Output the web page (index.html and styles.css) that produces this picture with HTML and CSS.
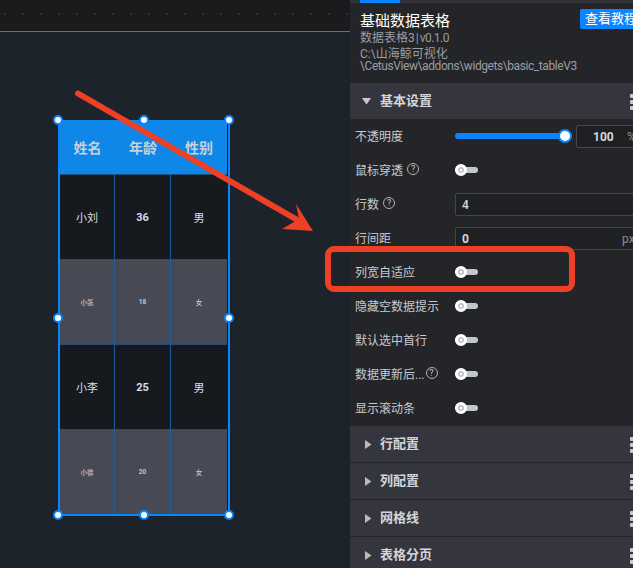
FILE: index.html
```html
<!DOCTYPE html>
<html lang="zh">
<head>
<meta charset="utf-8">
<title>基础数据表格</title>
<link rel="stylesheet" href="styles.css">
</head>
<body>
<div class="app">
  <main class="canvas">
    <div class="ruler"><div class="ruler-dots"></div></div>
    <div class="stage">
      <div class="widget">
        <div class="tbl">
          <div class="cell head">姓名</div><div class="cell head">年龄</div><div class="cell head">性别</div>
          <div class="cell dark">小刘</div><div class="cell dark num">36</div><div class="cell dark">男</div>
          <div class="cell grey">小张</div><div class="cell grey num">18</div><div class="cell grey">女</div>
          <div class="cell dark">小李</div><div class="cell dark num">25</div><div class="cell dark">男</div>
          <div class="cell grey">小徐</div><div class="cell grey num">20</div><div class="cell grey">女</div>
        </div>
        <i class="handle h-tl"></i><i class="handle h-tc"></i><i class="handle h-tr"></i>
        <i class="handle h-ml"></i><i class="handle h-mr"></i>
        <i class="handle h-bl"></i><i class="handle h-bc"></i><i class="handle h-br"></i>
      </div>
    </div>
  </main>
  <aside class="panel">
    <div class="tabstrip"><div class="tab-active"></div></div>
    <header class="info">
      <div class="title-row">
        <h1 class="title">基础数据表格</h1>
        <button class="help-btn">查看教程</button>
      </div>
      <div class="sub">数据表格<span class="tight">3 | v0.1.0</span></div>
      <div class="path">C:\山海鲸可视化<br><span class="tight-path">\CetusView\addons\widgets\basic_tableV3</span></div>
    </header>
    <section class="sec sec-open">
      <svg class="tri" viewBox="0 0 9 7"><path d="M0 0H9L4.5 6.5Z"/></svg>
      <span class="sec-name">基本设置</span>
      <span class="dots"><i></i><i></i><i></i></span>
    </section>
    <div class="rows">
      <div class="row"><label class="lbl">不透明度</label>
        <div class="slider"><div class="thumb"></div></div>
        <div class="field field-pct"><span class="val-c">100</span><span class="unit">%</span></div>
      </div>
      <div class="row"><label class="lbl">鼠标穿透<span class="q">?</span></label><div class="toggle"></div></div>
      <div class="row"><label class="lbl">行数<span class="q">?</span></label><div class="field">4</div></div>
      <div class="row"><label class="lbl">行间距</label><div class="field field-b">0<span class="unit unit-px">px</span></div></div>
      <div class="row"><label class="lbl">列宽自适应</label><div class="toggle"></div></div>
      <div class="row"><label class="lbl">隐藏空数据提示</label><div class="toggle"></div></div>
      <div class="row"><label class="lbl">默认选中首行</label><div class="toggle"></div></div>
      <div class="row"><label class="lbl">数据更新后...<span class="q q-tight">?</span></label><div class="toggle"></div></div>
      <div class="row"><label class="lbl">显示滚动条</label><div class="toggle"></div></div>
    </div>
    <section class="sec"><svg class="tri tri-r" viewBox="0 0 7 9"><path d="M0 0V9L6.5 4.5Z"/></svg><span class="sec-name">行配置</span><span class="dots"><i></i><i></i><i></i></span></section>
    <section class="sec"><svg class="tri tri-r" viewBox="0 0 7 9"><path d="M0 0V9L6.5 4.5Z"/></svg><span class="sec-name">列配置</span><span class="dots"><i></i><i></i><i></i></span></section>
    <section class="sec"><svg class="tri tri-r" viewBox="0 0 7 9"><path d="M0 0V9L6.5 4.5Z"/></svg><span class="sec-name">网格线</span><span class="dots"><i></i><i></i><i></i></span></section>
    <section class="sec"><svg class="tri tri-r" viewBox="0 0 7 9"><path d="M0 0V9L6.5 4.5Z"/></svg><span class="sec-name">表格分页</span><span class="dots"><i></i><i></i><i></i></span></section>
  </aside>
  <svg class="arrow" viewBox="0 0 633 568">
    <path d="M78 93.5L300 221.5" fill="none" stroke="#ee4025" stroke-width="6" stroke-linecap="round"/>
    <path d="M313 231L296 204L299 219L282 229Z" fill="#ee4025"/>
  </svg>
  <div class="callout"></div>
</div>
</body>
</html>
```
FILE: styles.css
```css
*, *::before, *::after { box-sizing: border-box; }
html, body { margin: 0; padding: 0; }
body {
  width: 633px;
  height: 568px;
  overflow: hidden;
  background: #1c232b;
  font-family: Roboto, "Noto Sans CJK SC", sans-serif;
}
.app { position: relative; display: flex; width: 633px; height: 568px; overflow: hidden; }

/* canvas */
.canvas { flex: 0 0 350px; display: flex; flex-direction: column; background: #1c232b; }
.ruler { height: 32px; flex: none; background: #1a1b1d; border-bottom: 1px solid #6b6c6e; padding-top: 13px; }
.ruler-dots {
  height: 2px;
  background-image: linear-gradient(90deg, #2d2e30 2px, transparent 2px);
  background-size: 18px 2px;
  background-position: 4px 0;
}
.stage { position: relative; flex: 1; }
.widget {
  position: absolute;
  left: 58px;
  top: 88px;
  width: 172px;
  height: 396px;
  border: 2px solid #0a84ff;
  background: #16191e;
}
.tbl {
  display: grid;
  grid-template-columns: 55px 56px 56px;
  grid-template-rows: 52px repeat(4, 85px);
  height: 392px;
}
.cell {
  display: flex;
  align-items: center;
  justify-content: center;
  color: #d8dce8;
  border-right: 1px solid #1c5d9a;
  border-top: 1px solid #1f5078;
}
.cell:nth-child(3n) { border-right: 0; }
.head {
  background: #0f87e8;
  color: #c9d1d6;
  font-size: 14px;
  font-weight: 700;
  border: 0;
  margin-top: -2px;
  margin-left: -1px;
  padding-left: 1px;
  padding-bottom: 1px;
  height: 54px;
}
.head:nth-child(3n) { margin-left: 0; padding-left: 0; }
.dark { background: #16191e; font-size: 11px; }
.grey { background: #474a55; font-size: 6.5px; font-weight: 500; color: #c3c7d4; }
.num { font-weight: 700; }
.handle {
  position: absolute;
  width: 10px;
  height: 10px;
  border-radius: 50%;
  background: #fff;
  border: 2px solid #0a84ff;
}
.h-tl { left: -7px; top: -7px; }
.h-tc { left: 79px; top: -7px; }
.h-tr { right: -6px; top: -7px; }
.h-ml { left: -7px; top: 191px; }
.h-mr { right: -6px; top: 191px; }
.h-bl { left: -7px; bottom: -6px; }
.h-bc { left: 79px; bottom: -6px; }
.h-br { right: -6px; bottom: -6px; }

/* panel */
.panel { flex: 0 0 283px; height: 568px; background: #242528; overflow: hidden; color: #c8cad0; }
.tabstrip { height: 3px; background: #34353b; padding-left: 10px; }
.tab-active { width: 40px; height: 3px; background: #0a84ff; }
.info { height: 80px; padding: 6px 0 0 10px; }
.title-row { display: flex; justify-content: space-between; align-items: flex-start; }
.title { margin: 2px 0 0; font-size: 15px; line-height: 20px; font-weight: 400; color: #fff; }
.help-btn {
  flex: none;
  width: 60px;
  height: 20px;
  margin: 0 -7px 0 0;
  padding: 0 0 0 5px;
  border: 0;
  border-radius: 2px;
  background: #0a84ff;
  color: #fff;
  font: 13px/20px Roboto, "Noto Sans CJK SC", sans-serif;
  text-align: left;
  white-space: nowrap;
  overflow: hidden;
}
.sub { margin-top: -1px; font-size: 12px; line-height: 16px; color: #9b9da3; }
.tight { letter-spacing: -0.5px; word-spacing: -1px; }
.path { margin-top: 2px; font-size: 12px; line-height: 12px; color: #9b9da3; white-space: nowrap; }
.tight-path { letter-spacing: -0.42px; }
.sec {
  display: flex;
  align-items: center;
  height: 37px;
  padding-left: 12px;
  background: #35363d;
  border-bottom: 1px solid #242528;
  position: relative;
}
.sec-open { height: 36px; border-bottom: 0; }
.tri { width: 9px; height: 7px; fill: #c8cad0; flex: none; }
.tri-r { width: 7px; height: 9px; margin-left: 3px; margin-right: 1px; fill: #b9bbc1; }
.sec-name { margin: -3px 0 0 9px; font-size: 13px; font-weight: 700; color: #d3d5da; }
.sec .tri-r + .sec-name { margin-left: 7px; }
.dots { position: absolute; left: 280px; top: 50%; margin-top: -7px; display: flex; flex-direction: column; gap: 2px; }
.dots i { display: block; width: 4px; height: 4px; background: #c8cad0; border-radius: 1px; }
.rows { padding-bottom: 1px; }
.row { display: flex; align-items: center; height: 34px; padding-left: 5px; }
.lbl { flex: 0 0 100px; display: flex; align-items: center; font-size: 12px; color: #c8cad0; white-space: nowrap; margin-top: -2px; }
.q {
  display: inline-flex;
  align-items: center;
  justify-content: center;
  width: 12px;
  height: 12px;
  margin-left: 4px;
  border: 1px solid #b0b2b8;
  border-radius: 50%;
  font-size: 9px;
  line-height: 1;
  color: #c0c2c8;
}
.q-tight { margin-left: 1px; }
.slider {
  flex: none;
  position: relative;
  width: 117px;
  height: 6px;
  border-radius: 3px;
  background: #0a84ff;
}
.thumb {
  position: absolute;
  right: 0;
  top: -4px;
  width: 14px;
  height: 14px;
  border-radius: 50%;
  background: #fff;
  border: 2px solid #0a84ff;
}
.field {
  flex: none;
  position: relative;
  width: 200px;
  height: 23px;
  padding-left: 6px;
  border: 1px solid #44464b;
  border-radius: 2px;
  background: #1f2023;
  font-size: 12px;
  font-weight: 500;
  line-height: 22px;
  color: #d6d8dc;
}
.field-b { font-weight: 700; }
.field-pct { margin-left: 4px; padding-left: 16px; font-weight: 700; }
.unit { position: absolute; left: 50px; top: 0; font-weight: 400; color: #8d8f95; }
.unit-px { left: 166px; }
.toggle {
  position: relative;
  width: 23px;
  height: 6px;
  margin-top: -1px;
  border-radius: 3px;
  background: #c4c6cf;
}
.toggle::before {
  content: "";
  position: absolute;
  left: 0;
  top: -3px;
  width: 12px;
  height: 12px;
  border-radius: 50%;
  background: #fff;
  border: 3px solid #fff;
  box-shadow: inset 0 0 0 1.5px #b5b7bf;
}

/* annotations */
.arrow { position: absolute; left: 0; top: 0; width: 633px; height: 568px; pointer-events: none; }
.callout {
  position: absolute;
  left: 325px;
  top: 246px;
  width: 250px;
  height: 46px;
  border: 6px solid #ee4025;
  border-radius: 9px;
}
```
